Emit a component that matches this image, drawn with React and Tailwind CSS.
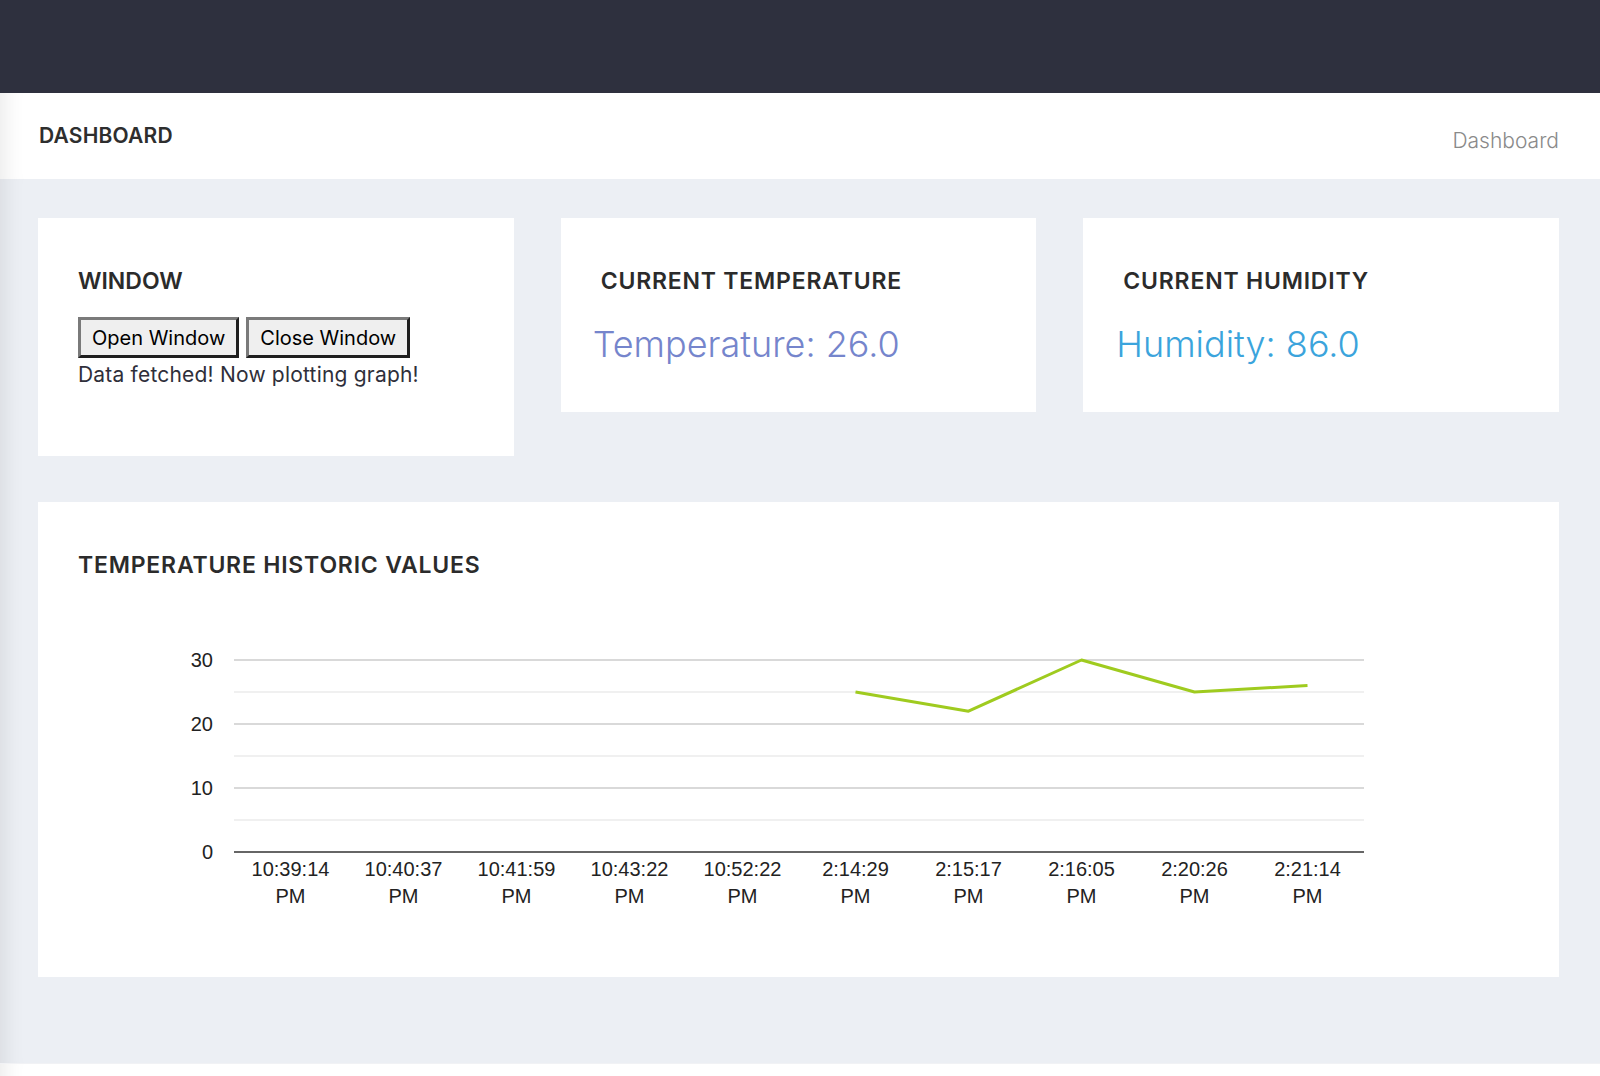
import React from 'react';

const LABELS = [
  '10:39:14', '10:40:37', '10:41:59', '10:43:22', '10:52:22',
  '2:14:29', '2:15:17', '2:16:05', '2:20:26', '2:21:14',
];
const VALUES = [null, null, null, null, null, 25, 22, 30, 25, 26];

const PLOT_LEFT = 156;
const PLOT_RIGHT = 1286;
const BASE_Y = 242;
const STEP = (PLOT_RIGHT - PLOT_LEFT) / LABELS.length;

const yFor = (v) => BASE_Y - v * 6.4;
const xFor = (i) => PLOT_LEFT + STEP / 2 + STEP * i;

const TempChart = () => {
  const pts = VALUES
    .map((v, i) => (v == null ? null : `${xFor(i)},${yFor(v)}`))
    .filter(Boolean)
    .join(' ');

  return (
    <svg width="1441" height="310" className="block mt-[32px]" style={{ fontFamily: '"Liberation Sans", Arial, sans-serif' }}>
      {/* minor gridlines */}
      {[5, 15, 25].map(v => (
        <line key={`m${v}`} x1={PLOT_LEFT} x2={PLOT_RIGHT} y1={yFor(v)} y2={yFor(v)} stroke="#ebebeb" strokeWidth="1.5" />
      ))}
      {/* major gridlines */}
      {[10, 20, 30].map(v => (
        <line key={`g${v}`} x1={PLOT_LEFT} x2={PLOT_RIGHT} y1={yFor(v)} y2={yFor(v)} stroke="#cccccc" strokeWidth="1.5" />
      ))}
      <line x1={PLOT_LEFT} x2={PLOT_RIGHT} y1={BASE_Y} y2={BASE_Y} stroke="#333333" strokeWidth="1.5" />

      {[0, 10, 20, 30].map(v => (
        <text key={`y${v}`} x="135" y={yFor(v) + 7} textAnchor="end" fontSize="20" fill="#222222">{v}</text>
      ))}

      {LABELS.map((l, i) => (
        <g key={l}>
          <text x={xFor(i)} y="266" textAnchor="middle" fontSize="20" fill="#222222">{l}</text>
          <text x={xFor(i)} y="293" textAnchor="middle" fontSize="20" fill="#222222">PM</text>
        </g>
      ))}

      <polyline points={pts} fill="none" stroke="#9fcb1f" strokeWidth="3" strokeLinejoin="round" />
    </svg>
  );
};

const Card = ({ className = '', children }) => (
  <div className={`bg-white px-[40px] pt-[50px] ${className}`}>{children}</div>
);

const Title = ({ children, className = '' }) => (
  <h4 className={`text-[23px] leading-[26px] font-semibold text-[#2b2b2b] tracking-[0.8px] ${className}`}>{children}</h4>
);

const btn = 'h-[41px] px-[11px] bg-[#efefef] text-[20px] text-black border-[3px] border-t-[#7a7a7a] border-l-[#7a7a7a] border-b-[#1f1f1f] border-r-[#1f1f1f]';

export default function App() {
  const shade = 'shadow-[inset_26px_0_22px_-22px_rgba(0,0,0,0.09)]';

  return (
    <div className="min-h-screen bg-white" style={{ fontFamily: 'Inter, "Noto Sans", sans-serif' }}>
      {/* Top bar */}
      <div className="h-[93px] bg-[#2e303e]" />

      {/* Page header */}
      <div className={`h-[86px] bg-white flex items-center justify-between pl-[39px] pr-[41px] ${shade}`}>
        <h1 className="text-[21px] font-semibold text-[#2e2e2e] tracking-[0.2px]">DASHBOARD</h1>
        <span className="text-[21px] font-light text-[#8a8a8a] pt-[10px]">Dashboard</span>
      </div>

      {/* Main */}
      <main className={`bg-[#eceff4] pl-[38px] pr-[41px] pt-[39px] pb-[86px] ${shade}`}>
        <div className="grid grid-cols-3 gap-[47px] items-start">
          <Card className="h-[238px]">
            <Title className="tracking-[0px]">WINDOW</Title>
            <div className="flex gap-[7px] mt-[23px]">
              <button className={btn}>Open Window</button>
              <button className={btn}>Close Window</button>
            </div>
            <p className="text-[21px] leading-[26px] tracking-[0.2px] text-[#2f2f3a] mt-[4px]">Data fetched! Now plotting graph!</p>
          </Card>

          <Card className="h-[194px]">
            <Title>CURRENT TEMPERATURE</Title>
            <p className="text-[36px] leading-[44px] font-light text-[#7585cc] mt-[28px] -ml-[8px]">Temperature: 26.0</p>
          </Card>

          <Card className="h-[194px]">
            <Title>CURRENT HUMIDITY</Title>
            <p className="text-[36px] leading-[44px] font-light text-[#3ba4dc] mt-[28px] -ml-[7px]">Humidity: 86.0</p>
          </Card>
        </div>

        <Card className="mt-[46px] h-[475px]">
          <Title>TEMPERATURE HISTORIC VALUES</Title>
          <TempChart />
        </Card>
      </main>

      {/* Footer */}
      <footer className={`h-[60px] bg-white border-t border-[#f1f2f5] ${shade}`} />
    </div>
  );
}
